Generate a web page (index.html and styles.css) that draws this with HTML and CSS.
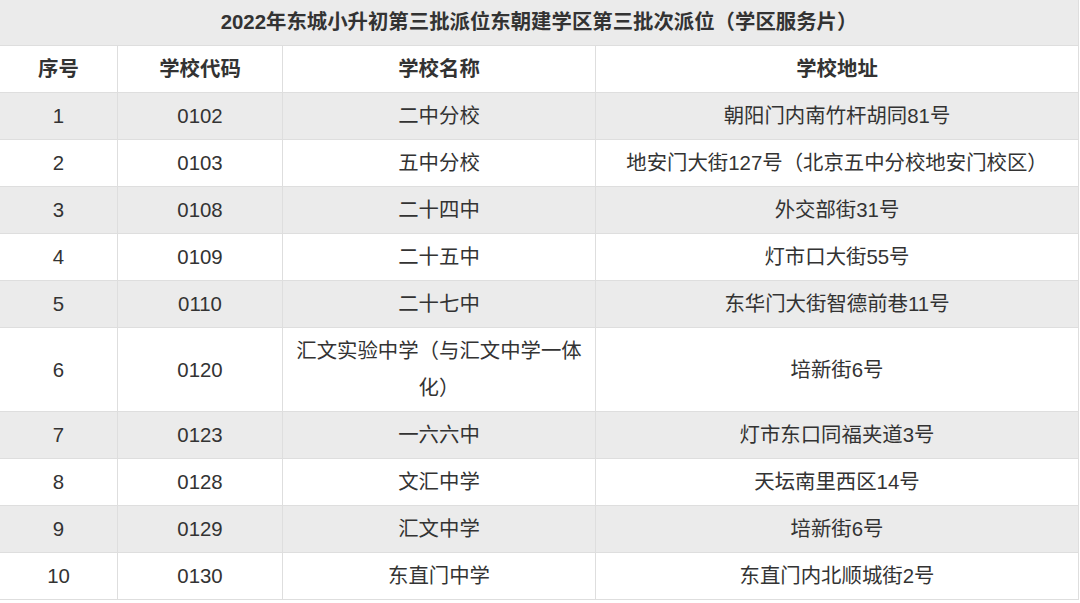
FILE: index.html
```html
<!DOCTYPE html>
<html lang="zh-CN">
<head>
<meta charset="utf-8">
<title>2022年东城小升初第三批派位</title>
<link rel="stylesheet" href="styles.css">
</head>
<body>
<table class="sheet">
  <colgroup>
    <col class="c-no">
    <col class="c-code">
    <col class="c-name">
    <col class="c-addr">
  </colgroup>
  <thead>
    <tr class="title"><th colspan="4">2022年东城小升初第三批派位东朝建学区第三批次派位（学区服务片）</th></tr>
    <tr class="head"><th>序号</th><th>学校代码</th><th>学校名称</th><th>学校地址</th></tr>
  </thead>
  <tbody>
    <tr class="odd"><td>1</td><td>0102</td><td>二中分校</td><td>朝阳门内南竹杆胡同81号</td></tr>
    <tr><td>2</td><td>0103</td><td>五中分校</td><td>地安门大街127号（北京五中分校地安门校区）</td></tr>
    <tr class="odd"><td>3</td><td>0108</td><td>二十四中</td><td>外交部街31号</td></tr>
    <tr><td>4</td><td>0109</td><td>二十五中</td><td>灯市口大街55号</td></tr>
    <tr class="odd"><td>5</td><td>0110</td><td>二十七中</td><td>东华门大街智德前巷11号</td></tr>
    <tr><td>6</td><td>0120</td><td>汇文实验中学（与汇文中学一体化）</td><td>培新街6号</td></tr>
    <tr class="odd"><td>7</td><td>0123</td><td>一六六中</td><td>灯市东口同福夹道3号</td></tr>
    <tr><td>8</td><td>0128</td><td>文汇中学</td><td>天坛南里西区14号</td></tr>
    <tr class="odd"><td>9</td><td>0129</td><td>汇文中学</td><td>培新街6号</td></tr>
    <tr><td>10</td><td>0130</td><td>东直门中学</td><td>东直门内北顺城街2号</td></tr>
  </tbody>
</table>
</body>
</html>
```

FILE: styles.css
```css
html, body {
  margin: 0;
  padding: 0;
  background: #ffffff;
}

body {
  font-family: "Liberation Sans", "Noto Sans CJK SC", sans-serif;
  color: #333333;
  overflow: hidden;
}

.sheet {
  border-collapse: collapse;
  table-layout: fixed;
  width: 1079px;
  margin: -1px 0 0 -1px;
  font-size: 20.4px;
}

.c-no { width: 118px; }
.c-code { width: 165px; }
.c-name { width: 313px; }
.c-addr { width: 483px; }

.sheet th,
.sheet td {
  border: 1px solid #dedede;
  padding: 5px 12px 4px;
  line-height: 37px;
  text-align: center;
  vertical-align: middle;
}

.sheet th {
  font-weight: bold;
  color: #333333;
}

.title th {
  background: #ebebeb;
  padding-top: 4px;
}

.head th {
  background: #ffffff;
}

.sheet td {
  background: #ffffff;
  font-weight: normal;
}

.odd td {
  background: #ebebeb;
}
```
